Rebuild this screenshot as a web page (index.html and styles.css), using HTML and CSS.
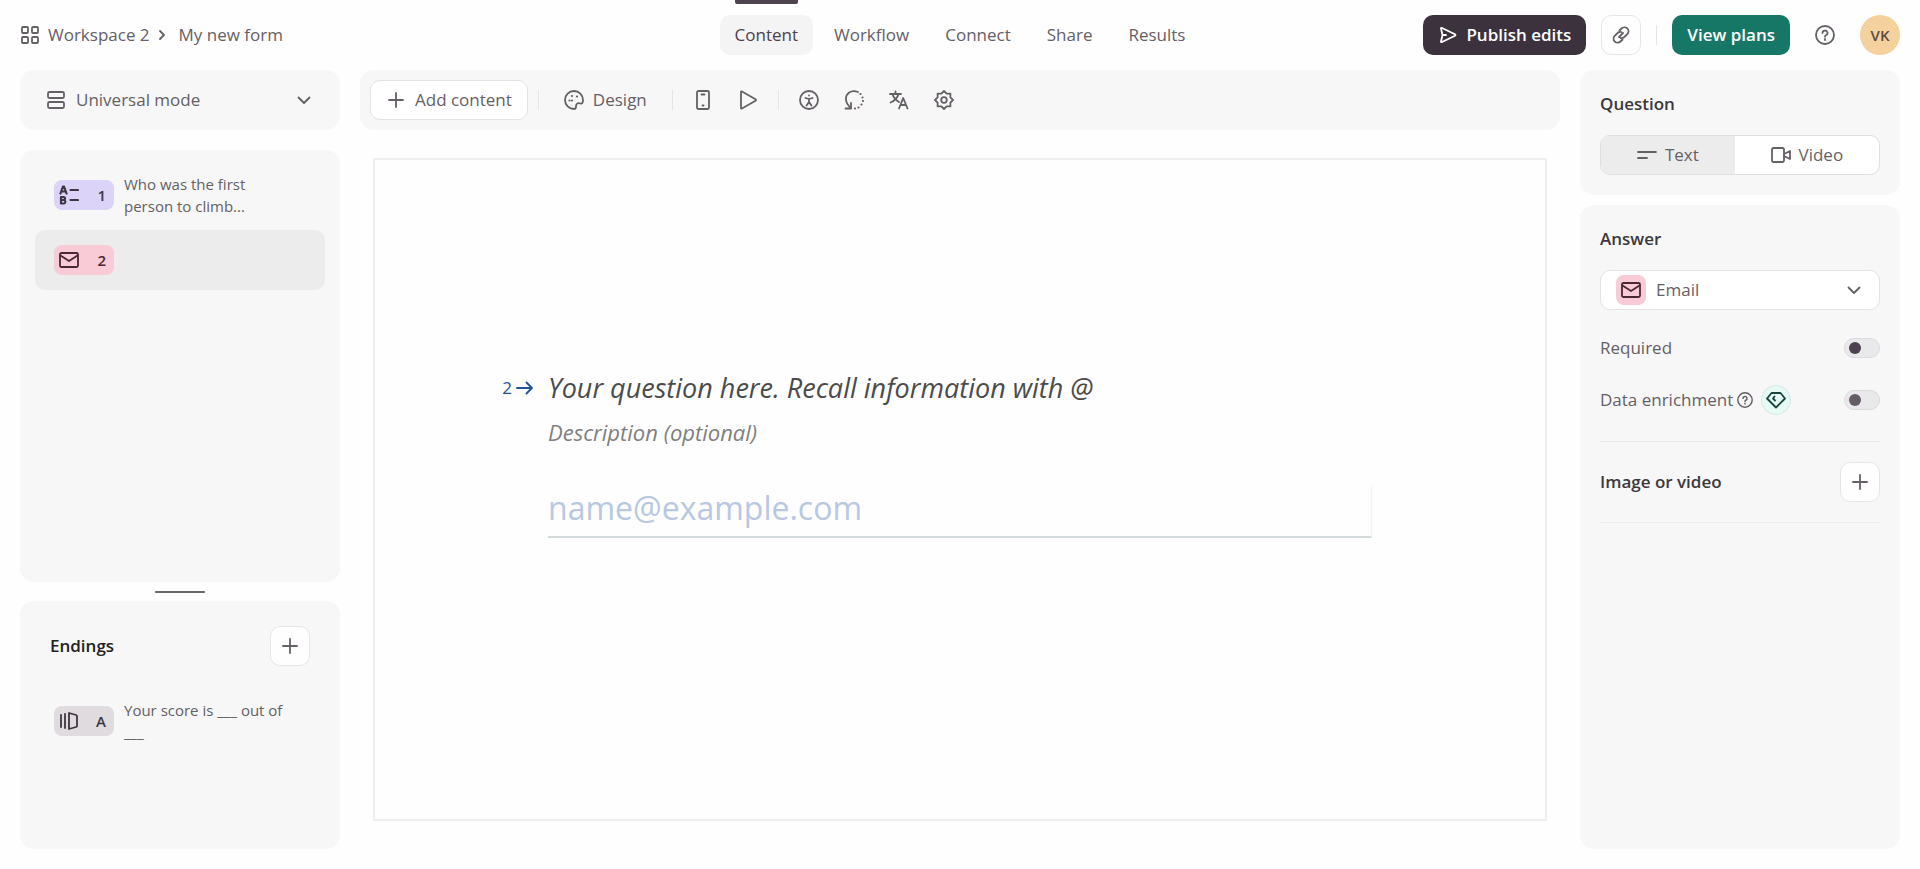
FILE: index.html
```html
<!DOCTYPE html>
<html lang="en">
<head>
<meta charset="UTF-8">
<meta name="viewport" content="width=device-width, initial-scale=1.0">
<title>My new form</title>
<link rel="stylesheet" href="styles.css">
</head>
<body>

<header class="topbar">
    <div class="breadcrumb">
        <svg class="icon" viewBox="0 0 20 20"><rect x="2" y="2" width="6" height="6" rx="1"/><rect x="12" y="2" width="6" height="6" rx="1"/><rect x="2" y="12" width="6" height="6" rx="1"/><rect x="12" y="12" width="6" height="6" rx="1"/></svg>
        <a href="#">Workspace 2</a>
        <svg class="icon crumb-arrow" viewBox="0 0 8 12"><path d="M2 2l4 4-4 4"/></svg>
        <a href="#">My new form</a>
    </div>
    <nav class="tabs">
        <a class="active" href="#">Content</a>
        <a href="#">Workflow</a>
        <a href="#">Connect</a>
        <a href="#">Share</a>
        <a href="#">Results</a>
    </nav>
    <div class="actions">
        <button class="btn btn-dark">
            <svg class="icon" viewBox="0 0 20 20"><path d="M3 3.500Q3 2.500 4 3l13 6.300q1 .7 0 1.400L4 17q-1 .5-1-.5L4.500 10zM4.500 10H8"/></svg>
            Publish edits
        </button>
        <button class="btn-square" aria-label="Copy link">
            <svg class="icon" viewBox="0 0 20 20"><path d="M8.500 5.500L10.500 3.500a4 4 0 0 1 5.800 5.700L13.300 12a4 4 0 0 1-3.800 1M11.500 14.500l-2 2a4 4 0 0 1-5.800-5.700L6.700 8a4 4 0 0 1 3.800-1M8 12l4-4"/></svg>
        </button>
        <span class="divider"></span>
        <button class="btn btn-green">View plans</button>
        <button class="btn-plain help" aria-label="Help">
            <svg class="icon" viewBox="0 0 20 20"><circle cx="10" cy="10" r="9"/><path d="M7.500 8a2.500 2.500 0 1 1 3.500 2.300q-1 .5-1 1.500M10 14v1"/></svg>
        </button>
        <button class="avatar">VK</button>
    </div>
</header>

<div class="workspace">
    <aside class="left">
        <div class="panel mode">
            <svg class="icon" viewBox="0 0 20 20"><rect x="2" y="2" width="16" height="6" rx="1.500"/><rect x="2" y="12" width="16" height="6" rx="1.500"/></svg>
            <select aria-label="Mode">
                <option>Universal mode</option>
            </select>
            <svg class="icon chevron" viewBox="0 0 20 20"><path d="M4.500 7.500L10 13l5.500-5.500"/></svg>
        </div>

        <div class="panel slides">
            <a class="slide" href="#">
                <span class="badge purple">
                    <svg class="icon" viewBox="0 0 20 20"><path d="M1.500 8.500L4 1.500h1l2.500 7M2.500 6.500h4M2 12v6.500h3a1.800 1.800 0 0 0 0-3.500H2M2 12h2.500a1.500 1.500 0 0 1 0 3M11.500 5H19M11.500 15H19"/></svg>
                    1
                </span>
                <span class="slide-text">Who was the first person to climb...</span>
            </a>
            <a class="slide selected" href="#">
                <span class="badge pink">
                    <svg class="icon" viewBox="0 0 20 20"><rect x="1" y="3" width="18" height="14" rx="1.500"/><path d="M1.500 5.500L10 11l8.500-5.500"/></svg>
                    2
                </span>
            </a>
        </div>

        <div class="handle"></div>

        <div class="panel endings">
            <div class="endings-head">
                <h2>Endings</h2>
                <button class="btn-square" aria-label="Add ending">
                    <svg class="icon" viewBox="0 0 20 20"><path d="M10 3v14M3 10h14"/></svg>
                </button>
            </div>
            <a class="slide" href="#">
                <span class="badge grey">
                    <svg class="icon" viewBox="0 0 20 20"><path d="M2 4v12M6 3v14M10 2l7 2q1 .3 1 1v10q0 .7-1 1l-7 2z"/></svg>
                    A
                </span>
                <span class="slide-text">Your score is ___ out of ___</span>
            </a>
        </div>
    </aside>

    <main class="center">
        <div class="panel toolbar">
            <button class="btn btn-light">
                <svg class="icon" viewBox="0 0 20 20"><path d="M10 3v14M3 10h14"/></svg>
                Add content
            </button>
            <span class="divider"></span>
            <button class="btn btn-plain">
                <svg class="icon" viewBox="0 0 20 20"><path d="M10 1a9 9 0 1 0 0 18c2 0 2-1 2-2.500 0-3 2-4 4.500-3 1.500.5 2.500-.5 2.500-3.500a9 9 0 0 0-9-9z"/><path class="dots" d="M8 6h.01M5.500 10.500h.01M13 6.500h.01M8 10.500h.01"/></svg>
                Design
            </button>
            <span class="divider"></span>
            <div class="tools">
                <button class="btn-plain tool" aria-label="Mobile preview">
                    <svg class="icon" viewBox="0 0 20 20"><rect x="4" y="1" width="12" height="18" rx="1.500"/><path d="M8.500 4.500h3M9.500 15.500h1"/></svg>
                </button>
                <button class="btn-plain tool" aria-label="Play">
                    <svg class="icon" viewBox="0 0 20 20"><path d="M3 2q0-1 1-.5l13.500 7.700q1 .8 0 1.600L4 18.500q-1 .5-1-.5z"/></svg>
                </button>
            </div>
            <span class="divider"></span>
            <div class="tools">
                <button class="btn-plain tool" aria-label="Accessibility">
                    <svg class="icon" viewBox="0 0 20 20"><circle cx="10" cy="10" r="9"/><path d="M10 5.500h.01M6.500 8l3.500 1 3.500-1M10 9v3M7.500 15.500L10 12l2.500 3.500"/></svg>
                </button>
                <button class="btn-plain tool" aria-label="Version history">
                    <svg class="icon" viewBox="0 0 20 20"><path d="M14 2C7-1 1.500 4 2 9.500c.2 3.500 2 6 5 8.500M1.500 18.500H7V13"/><path class="dots" d="M16.500 4h.01M18.500 7.500h.01M19 11h.01M17.500 14.500h.01M14.500 17.500h.01M11 18.500h.01"/></svg>
                </button>
                <button class="btn-plain tool" aria-label="Translate">
                    <svg class="icon" viewBox="0 0 20 20"><path d="M1 4h11M6.500 1.500V4M3.500 4c1 3.500 4 6.500 6.500 8M9.500 4C8.500 8 5 11 1.500 12.500M10 18.500l4.200-10.500 4.300 10.500M11.500 15h5.500"/></svg>
                </button>
                <button class="btn-plain tool" aria-label="Settings">
                    <svg class="icon" viewBox="0 0 20 20"><path d="M10 1l2.600 2.600h3.800v3.800L19 10l-2.600 2.600v3.800h-3.800L10 19l-2.600-2.600H3.600v-3.800L1 10l2.600-2.600V3.600h3.800z"/><circle cx="10" cy="10" r="2.800"/></svg>
                </button>
            </div>
        </div>

        <section class="canvas">
            <div class="number">
                2
                <svg class="icon" viewBox="0 0 20 20"><path d="M2 10h15M11.500 4.500L17 10l-5.500 5.500"/></svg>
            </div>
            <div class="question">
                <h1>Your question here. Recall information with @</h1>
                <p>Description (optional)</p>
                <input type="email" aria-label="Email" placeholder="name@example.com">
            </div>
        </section>
    </main>

    <aside class="right">
        <div class="panel settings">
            <h2>Question</h2>
            <div class="segmented">
                <button class="on">
                    <svg class="icon" viewBox="0 0 20 20"><path d="M1 7h18M1 13h9"/></svg>
                    Text
                </button>
                <button>
                    <svg class="icon" viewBox="0 0 20 20"><rect x="1" y="3" width="12" height="14" rx="1.500"/><path d="M13 9l6-3v8l-6-3"/></svg>
                    Video
                </button>
            </div>
        </div>

        <div class="panel settings answer">
            <h2>Answer</h2>
            <div class="select-box">
                <span class="type-icon pink">
                    <svg class="icon" viewBox="0 0 20 20"><rect x="1" y="3" width="18" height="14" rx="1.500"/><path d="M1.500 5.500L10 11l8.500-5.500"/></svg>
                </span>
                <select aria-label="Answer type">
                    <option>Email</option>
                </select>
                <svg class="icon chevron" viewBox="0 0 20 20"><path d="M4.500 7.500L10 13l5.500-5.500"/></svg>
            </div>
            <div class="row">
                <label for="required">Required</label>
                <input class="toggle" type="checkbox" id="required">
            </div>
            <div class="row">
                <label for="enrichment">Data enrichment</label>
                <svg class="icon hint" viewBox="0 0 20 20"><circle cx="10" cy="10" r="9"/><path d="M7.500 8a2.500 2.500 0 1 1 3.500 2.300q-1 .5-1 1.500M10 14v1"/></svg>
                <span class="gem">
                    <svg class="icon" viewBox="0 0 20 20"><path d="M5.500 3h9L19 8.500 10 17.500 1 8.500zM8.500 6.500L7 8.500l2 2"/></svg>
                </span>
                <input class="toggle muted" type="checkbox" id="enrichment">
            </div>
            <div class="media">
                <h2>Image or video</h2>
                <button class="btn-square" aria-label="Add image or video">
                    <svg class="icon" viewBox="0 0 20 20"><path d="M10 3v14M3 10h14"/></svg>
                </button>
            </div>
        </div>
    </aside>
</div>

</body>
</html>
```
FILE: styles.css
```css
* {
    box-sizing: border-box;
}
body {
    margin: 0;
    min-height: 100vh;
    display: flex;
    flex-direction: column;
    font-family: "Open Sans", "Noto Sans", sans-serif;
    font-size: 17px;
    line-height: 24px;
    color: #655f66;
    background: #fefefe;
}
a {
    color: inherit;
    text-decoration: none;
}
h1, h2, p {
    margin: 0;
}
h2 {
    font-size: 17px;
    font-weight: 600;
    line-height: 24px;
    color: #3c383e;
}
button, select, input {
    font: inherit;
    color: inherit;
}
button {
    cursor: pointer;
}
select {
    flex: 1;
    min-width: 0;
    padding: 0;
    border: none;
    background: none;
    appearance: none;
    outline: none;
}
.icon {
    width: 20px;
    height: 20px;
    flex: none;
    fill: none;
    stroke: currentColor;
    stroke-width: 1.8;
    stroke-linecap: round;
    stroke-linejoin: round;
}
.dots {
    stroke-width: 2.2;
}

/* top bar */
.topbar {
    display: grid;
    grid-template-columns: 1fr auto 1fr;
    align-items: center;
    height: 70px;
    padding: 0 20px;
    font-weight: 500;
}
.breadcrumb {
    display: flex;
    align-items: center;
    gap: 8px;
}
.crumb-arrow {
    width: 8px;
    height: 12px;
    margin-right: 5px;
}
.tabs {
    display: flex;
    gap: 6px;
}
.tabs a {
    position: relative;
    padding: 8px 15px;
    border-radius: 10px;
}
.tabs .active {
    background: #f4f4f4;
    color: #4c414d;
}
.tabs .active::before {
    content: "";
    position: absolute;
    top: -15px;
    left: 15px;
    right: 15px;
    height: 4px;
    background: #4f4350;
    border-radius: 0 0 2px 2px;
}
.actions {
    display: flex;
    align-items: center;
    justify-content: flex-end;
    gap: 15px;
}
.btn {
    display: flex;
    align-items: center;
    gap: 8px;
    height: 40px;
    padding: 0 15px;
    border: none;
    border-radius: 10px;
    font-weight: 500;
    white-space: nowrap;
}
.btn-dark {
    background: #3c323e;
    color: #fff;
    font-weight: 600;
}
.btn-green {
    background: #177767;
    color: #fff;
    font-weight: 600;
}
.btn-light {
    background: #fff;
    border: 1px solid #e3e3e4;
}
.btn-plain {
    border: none;
    background: none;
}
.btn-square {
    display: flex;
    align-items: center;
    justify-content: center;
    width: 40px;
    height: 40px;
    padding: 0;
    border: 1px solid #e6e6e7;
    border-radius: 10px;
    background: #fefefe;
}
.divider {
    width: 1px;
    height: 20px;
    background: #e5e5e6;
}
.help {
    display: flex;
    padding: 0 10px;
}
.avatar {
    width: 40px;
    height: 40px;
    padding: 0;
    border: none;
    border-radius: 50%;
    background: #f5d29d;
    color: #5f4b45;
    font-size: 15px;
    font-weight: 600;
}

/* three columns */
.workspace {
    flex: 1;
    display: grid;
    grid-template-columns: 320px minmax(0, 1fr) 320px;
    gap: 20px;
    padding: 0 20px 20px;
}
.panel {
    background: #f7f7f7;
    border-radius: 14px;
}
.left, .center, .right {
    display: flex;
    flex-direction: column;
}

/* left column */
.mode {
    display: flex;
    align-items: center;
    gap: 10px;
    height: 60px;
    padding: 0 26px;
    margin-bottom: 20px;
}
.slides {
    flex: 1;
    padding: 15px;
}
.slide {
    display: flex;
    align-items: center;
    gap: 10px;
    height: 60px;
    padding: 0 19px;
    margin-bottom: 5px;
    border-radius: 10px;
}
.slide.selected {
    background: #ececec;
}
.slide-text {
    max-width: 170px;
    font-size: 15px;
    line-height: 22px;
}
.badge {
    display: flex;
    align-items: center;
    justify-content: space-between;
    flex: none;
    width: 60px;
    height: 30px;
    padding: 0 8px 0 5px;
    border-radius: 8px;
    font-size: 15px;
    font-weight: 600;
    color: #3f3641;
}
.purple {
    background: #dbd3f8;
}
.purple .icon {
    stroke-width: 2.2;
}
.pink {
    background: #f8cbd7;
    color: #4a2735;
}
.grey {
    background: #dfdbdf;
}
.handle {
    width: 50px;
    height: 2px;
    margin: 9px auto 8px;
    border-radius: 1px;
    background: #69636a;
}
.endings {
    min-height: 248px;
    padding: 25px 15px;
}
.endings-head {
    display: flex;
    align-items: center;
    justify-content: space-between;
    padding: 0 15px;
    margin-bottom: 25px;
}
.endings h2 {
    color: #222;
}

/* form canvas */
.toolbar {
    display: flex;
    align-items: center;
    gap: 10px;
    height: 60px;
    padding: 0 10px;
}
.toolbar .btn {
    gap: 9px;
}
.tools {
    display: flex;
    gap: 5px;
}
.tool {
    display: flex;
    align-items: center;
    justify-content: center;
    width: 40px;
    height: 40px;
    padding: 0;
}
.canvas {
    flex: 1;
    display: grid;
    grid-template-columns: 1fr minmax(0, 824px) 1fr;
    align-content: center;
    margin: 28px 13px;
    padding-bottom: 72px;
    border: 2px solid #efefef;
}
.number {
    display: flex;
    align-items: center;
    justify-content: flex-end;
    gap: 3px;
    height: 36px;
    padding-right: 13px;
    color: #1f5193;
}
.question h1 {
    font-size: 27px;
    font-weight: 400;
    font-style: italic;
    line-height: 36px;
    color: #4b4b4b;
}
.question p {
    margin-top: 10px;
    font-size: 22px;
    font-style: italic;
    line-height: 32px;
    color: #808080;
}
.question input {
    display: block;
    width: 100%;
    margin-top: 36px;
    padding: 0 0 4px;
    border: none;
    border-right: 1px solid #f4f4f4;
    border-bottom: 2px solid #d3dadb;
    background: none;
    outline: none;
    font-size: 32px;
    line-height: 48px;
}
.question input::placeholder {
    color: #b8c8e2;
    opacity: 1;
}

/* right column */
.right {
    gap: 10px;
}
.settings {
    padding: 22px 20px 20px;
}
.segmented {
    display: flex;
    height: 40px;
    margin-top: 19px;
    border: 1px solid #dfdfe0;
    border-radius: 10px;
    background: #fff;
    overflow: hidden;
}
.segmented button {
    display: flex;
    align-items: center;
    justify-content: center;
    gap: 8px;
    flex: 1 1 auto;
    padding: 0;
    border: none;
    background: none;
}
.segmented .on {
    background: #ececec;
}
.answer {
    flex: 1;
}
.select-box {
    display: flex;
    align-items: center;
    gap: 10px;
    height: 40px;
    margin: 19px 0 27px;
    padding: 0 15px;
    border: 1px solid #e3e3e4;
    border-radius: 10px;
    background: #fff;
}
.type-icon {
    display: flex;
    align-items: center;
    justify-content: center;
    width: 30px;
    height: 30px;
    border-radius: 8px;
}
.row {
    display: flex;
    align-items: center;
    height: 22px;
    margin-bottom: 30px;
}
.hint {
    width: 16px;
    height: 16px;
    margin-left: 4px;
}
.gem {
    display: flex;
    align-items: center;
    justify-content: center;
    width: 30px;
    height: 30px;
    margin-left: 8px;
    border: 1px solid #d3eae4;
    border-radius: 50%;
    background: #e6fbf5;
    color: #19453f;
}
.toggle {
    display: flex;
    align-items: center;
    width: 36px;
    height: 20px;
    margin: 0 0 0 auto;
    padding: 0 4px;
    border: 1px solid #dcdadd;
    border-radius: 10px;
    background: #e9e8eb;
    appearance: none;
    cursor: pointer;
}
.toggle::before {
    content: "";
    width: 12px;
    height: 12px;
    border-radius: 50%;
    background: #4c414f;
}
.toggle.muted::before {
    background: #655c67;
}
.toggle:checked {
    justify-content: flex-end;
}
.media {
    display: flex;
    align-items: center;
    justify-content: space-between;
    padding: 20px 0;
    border-top: 1px solid #e8e8e8;
    border-bottom: 1px solid #ededed;
}
```
